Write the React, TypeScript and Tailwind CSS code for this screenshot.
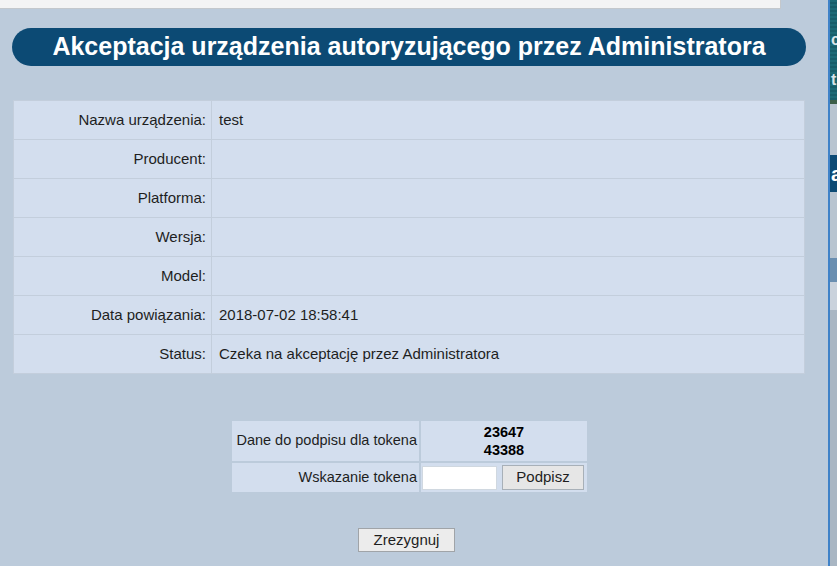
const rows: [string, string][] = [
  ["Nazwa urządzenia:", "test"],
  ["Producent:", ""],
  ["Platforma:", ""],
  ["Wersja:", ""],
  ["Model:", ""],
  ["Data powiązania:", "2018-07-02 18:58:41"],
  ["Status:", "Czeka na akceptację przez Administratora"],
];

export default function App() {
  return (
    <div
      className="flex h-[566px] w-[837px] overflow-hidden bg-[#bccbdb] text-[15px] text-[#1e1e1e]"
      style={{ fontFamily: '"Liberation Sans", Arial, sans-serif' }}
    >
      <div className="flex w-[828px] shrink-0 flex-col">
        <div className="h-[9px] w-[781px] border-r border-b border-[#c4c8cc] bg-[#f4f4f4]" />

        <div className="ml-[12px] w-[794px]">
          <div className="mt-[19px] flex h-[38px] items-center justify-center rounded-full bg-[#0c4a74] text-[25px] font-bold text-white">
            Akceptacja urządzenia autoryzującego przez Administratora
          </div>

          <table className="mt-[34px] ml-[1px] w-[792px] border-separate border-spacing-[1px] bg-[#c3cedc]">
            <tbody>
              {rows.map(([label, value]) => (
                <tr key={label} className="h-[38px]">
                  <td className="w-[197px] bg-[#d3deee] pr-[5px] text-right">{label}</td>
                  <td className="bg-[#d3deee] pl-[7px]">{value}</td>
                </tr>
              ))}
            </tbody>
          </table>

          <div className="mt-[45px] flex justify-center">
            <table className="ml-[1px] border-separate border-spacing-[2px] text-[14.5px]">
              <tbody>
                <tr className="h-[40px]">
                  <td className="w-[187px] bg-[#d3deee] pr-[2px] text-right whitespace-nowrap">
                    Dane do podpisu dla tokena
                  </td>
                  <td className="w-[166px] bg-[#d3deee] text-center leading-[18px] font-bold text-black">
                    23647
                    <br />
                    43388
                  </td>
                </tr>
                <tr className="h-[29px]">
                  <td className="bg-[#d3deee] pr-[2px] text-right whitespace-nowrap">Wskazanie tokena</td>
                  <td className="bg-[#d3deee]">
                    <div className="flex items-center">
                      <input className="ml-[1px] h-[24px] w-[75px] border border-[#d0d8e0] bg-white outline-none" />
                      <button className="ml-[5px] h-[25px] w-[82px] border border-[#a8b0b8] bg-[#e6e6e6] text-[15px] text-[#1e1e1e]">
                        Podpisz
                      </button>
                    </div>
                  </td>
                </tr>
              </tbody>
            </table>
          </div>

          <div className="mt-[34px] flex justify-center">
            <button className="mr-[5px] h-[24px] w-[97px] border border-[#a0a4a8] bg-[#ececec] text-[15px] text-[#1e1e1e]">
              Zrezygnuj
            </button>
          </div>
        </div>
      </div>

      <div className="w-[2px] shrink-0 bg-[#3f82c8]" />

      <div className="flex flex-1 flex-col overflow-hidden text-[16px] font-bold leading-none text-white">
        <div className="flex h-[100px] flex-col bg-[#175e6a] bg-[repeating-linear-gradient(0deg,#175e6a_0px,#175e6a_2px,#1c6a76_2px,#1c6a76_4px)] pl-[1px]">
          <span className="mt-[32px] text-[#d8e4e8]">c</span>
          <span className="mt-[24px] text-[#d8e4e8]">t</span>
        </div>
        <div className="h-[4px] bg-[#3c5e48]" />
        <div className="h-[51px] bg-[#b8c4d0]" />
        <div className="flex h-[37px] items-center bg-[#0c4a74] pl-[1px] text-[20px]">a</div>
        <div className="h-[66px] bg-[#b8c4d0]" />
        <div className="h-[24px] bg-[#6a8eb0]" />
        <div className="h-[28px] bg-[#cad2dc]" />
        <div className="flex-1 bg-[#a9b6c3]" />
      </div>
    </div>
  );
}
